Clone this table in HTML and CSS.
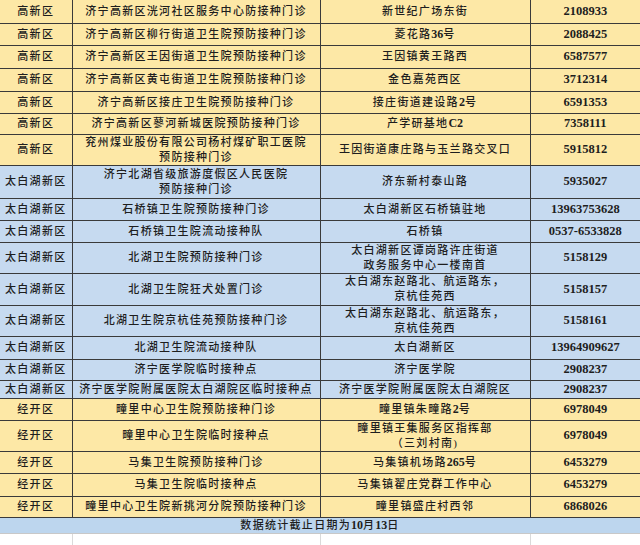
FILE: index.html
```html
<!DOCTYPE html>
<html lang="zh-CN">
<head>
<meta charset="utf-8">
<title>接种点</title>
<link rel="stylesheet" href="styles.css">
</head>
<body>
<table class="sheet">
<colgroup><col class="c1"><col class="c2"><col class="c3"><col class="c4"></colgroup>
<tbody>
<tr class="y h23"><td>高新区</td><td>济宁高新区洸河社区服务中心防接种门诊</td><td>新世纪广场东街</td><td class="num">2108933</td></tr>
<tr class="y h22"><td>高新区</td><td>济宁高新区柳行街道卫生院预防接种门诊</td><td>菱花路<span class="n">36</span>号</td><td class="num">2088425</td></tr>
<tr class="y h23"><td>高新区</td><td>济宁高新区王因街道卫生院预防接种门诊</td><td>王因镇黄王路西</td><td class="num">6587577</td></tr>
<tr class="y h23"><td>高新区</td><td>济宁高新区黄屯街道卫生院预防接种门诊</td><td>金色嘉苑西区</td><td class="num">3712314</td></tr>
<tr class="y h22"><td>高新区</td><td>济宁高新区接庄卫生院预防接种门诊</td><td>接庄街道建设路<span class="n">2</span>号</td><td class="num">6591353</td></tr>
<tr class="y h21"><td>高新区</td><td>济宁高新区蓼河新城医院预防接种门诊</td><td>产学研基地<span class="n">C2</span></td><td class="num">7358111</td></tr>
<tr class="y h31"><td>高新区</td><td>兖州煤业股份有限公司杨村煤矿职工医院<br>预防接种门诊</td><td>王因街道康庄路与玉兰路交叉口</td><td class="num">5915812</td></tr>
<tr class="b h33"><td>太白湖新区</td><td>济宁北湖省级旅游度假区人民医院<br>预防接种门诊</td><td>济东新村泰山路</td><td class="num">5935027</td></tr>
<tr class="b h22"><td>太白湖新区</td><td>石桥镇卫生院预防接种门诊</td><td>太白湖新区石桥镇驻地</td><td class="num">13963753628</td></tr>
<tr class="b h22"><td>太白湖新区</td><td>石桥镇卫生院流动接种队</td><td>石桥镇</td><td class="num">0537-6533828</td></tr>
<tr class="b h31"><td>太白湖新区</td><td>北湖卫生院预防接种门诊</td><td>太白湖新区谭岗路许庄街道<br>政务服务中心一楼南首</td><td class="num">5158129</td></tr>
<tr class="b h32"><td>太白湖新区</td><td>北湖卫生院狂犬处置门诊</td><td>太白湖东赵路北、航运路东，<br>京杭佳苑西</td><td class="num">5158157</td></tr>
<tr class="b h31"><td>太白湖新区</td><td>北湖卫生院京杭佳苑预防接种门诊</td><td>太白湖东赵路北、航运路东，<br>京杭佳苑西</td><td class="num">5158161</td></tr>
<tr class="b h23"><td>太白湖新区</td><td>北湖卫生院流动接种队</td><td>太白湖新区</td><td class="num">13964909627</td></tr>
<tr class="b h21"><td>太白湖新区</td><td>济宁医学院临时接种点</td><td>济宁医学院</td><td class="num">2908237</td></tr>
<tr class="b h18"><td>太白湖新区</td><td>济宁医学院附属医院太白湖院区临时接种点</td><td>济宁医学院附属医院太白湖院区</td><td class="num">2908237</td></tr>
<tr class="y h22"><td>经开区</td><td>疃里中心卫生院预防接种门诊</td><td>疃里镇朱疃路<span class="n">2</span>号</td><td class="num">6978049</td></tr>
<tr class="y h31"><td>经开区</td><td>疃里中心卫生院临时接种点</td><td>疃里镇王集服务区指挥部<br>（三刘村南)</td><td class="num">6978049</td></tr>
<tr class="y h22"><td>经开区</td><td>马集卫生院预防接种门诊</td><td>马集镇机场路<span class="n">265</span>号</td><td class="num">6453279</td></tr>
<tr class="y h23"><td>经开区</td><td>马集卫生院临时接种点</td><td>马集镇翟庄党群工作中心</td><td class="num">6453279</td></tr>
<tr class="y h21"><td>经开区</td><td>疃里中心卫生院新挑河分院预防接种门诊</td><td>疃里镇盛庄村西邻</td><td class="num">6868026</td></tr>
<tr class="foot h16"><td colspan="4">数据统计截止日期为<span class="n">10</span>月<span class="n">13</span>日</td></tr>
<tr class="blank"><td></td><td></td><td></td><td></td></tr>
</tbody>
</table>
</body>
</html>
```
FILE: styles.css
```css
html, body {
  margin: 0;
  padding: 0;
  background: #ffffff;
}
.sheet {
  width: 640px;
  table-layout: fixed;
  border-collapse: collapse;
  font-family: "Liberation Serif", "Noto Sans CJK SC", serif;
  font-size: 11px;
  font-weight: 500;
  color: #1e1e1e;
  letter-spacing: 1.3px;
}
.c1 { width: 72px; }
.c2 { width: 248px; }
.c3 { width: 210px; }
.c4 { width: 110px; }
.sheet td {
  padding: 0;
  text-align: center;
  vertical-align: middle;
  line-height: 15px;
  border: 1px solid #3a3a3a;
  white-space: nowrap;
  overflow: hidden;
}
.sheet tr td:first-child { border-left: none; }
.sheet tr td:last-child { border-right: none; }
.sheet tr:first-child td { border-top: none; }
.y td { background: #fde8a6; }
.b td { background: #c6daf0; }
.num {
  font-weight: 700;
  font-size: 12.5px;
  letter-spacing: 0;
}
.n {
  font-weight: 700;
  font-size: 12px;
  letter-spacing: 0;
}
.foot td {
  background: #bdd6ee;
  border-bottom: 1px solid #c8c8c8;
  text-align: center;
}
.blank td {
  height: 12px;
  background: #ffffff;
  border-top: none;
  border-bottom: none;
  border-left: 1px solid #dadada;
  border-right: 1px solid #dadada;
}
.h16 { height: 16px; }
.h18 { height: 18px; }
.h21 { height: 21px; }
.h22 { height: 22px; }
.h23 { height: 23px; }
.h31 { height: 31px; }
.h32 { height: 32px; }
.h33 { height: 33px; }
```
